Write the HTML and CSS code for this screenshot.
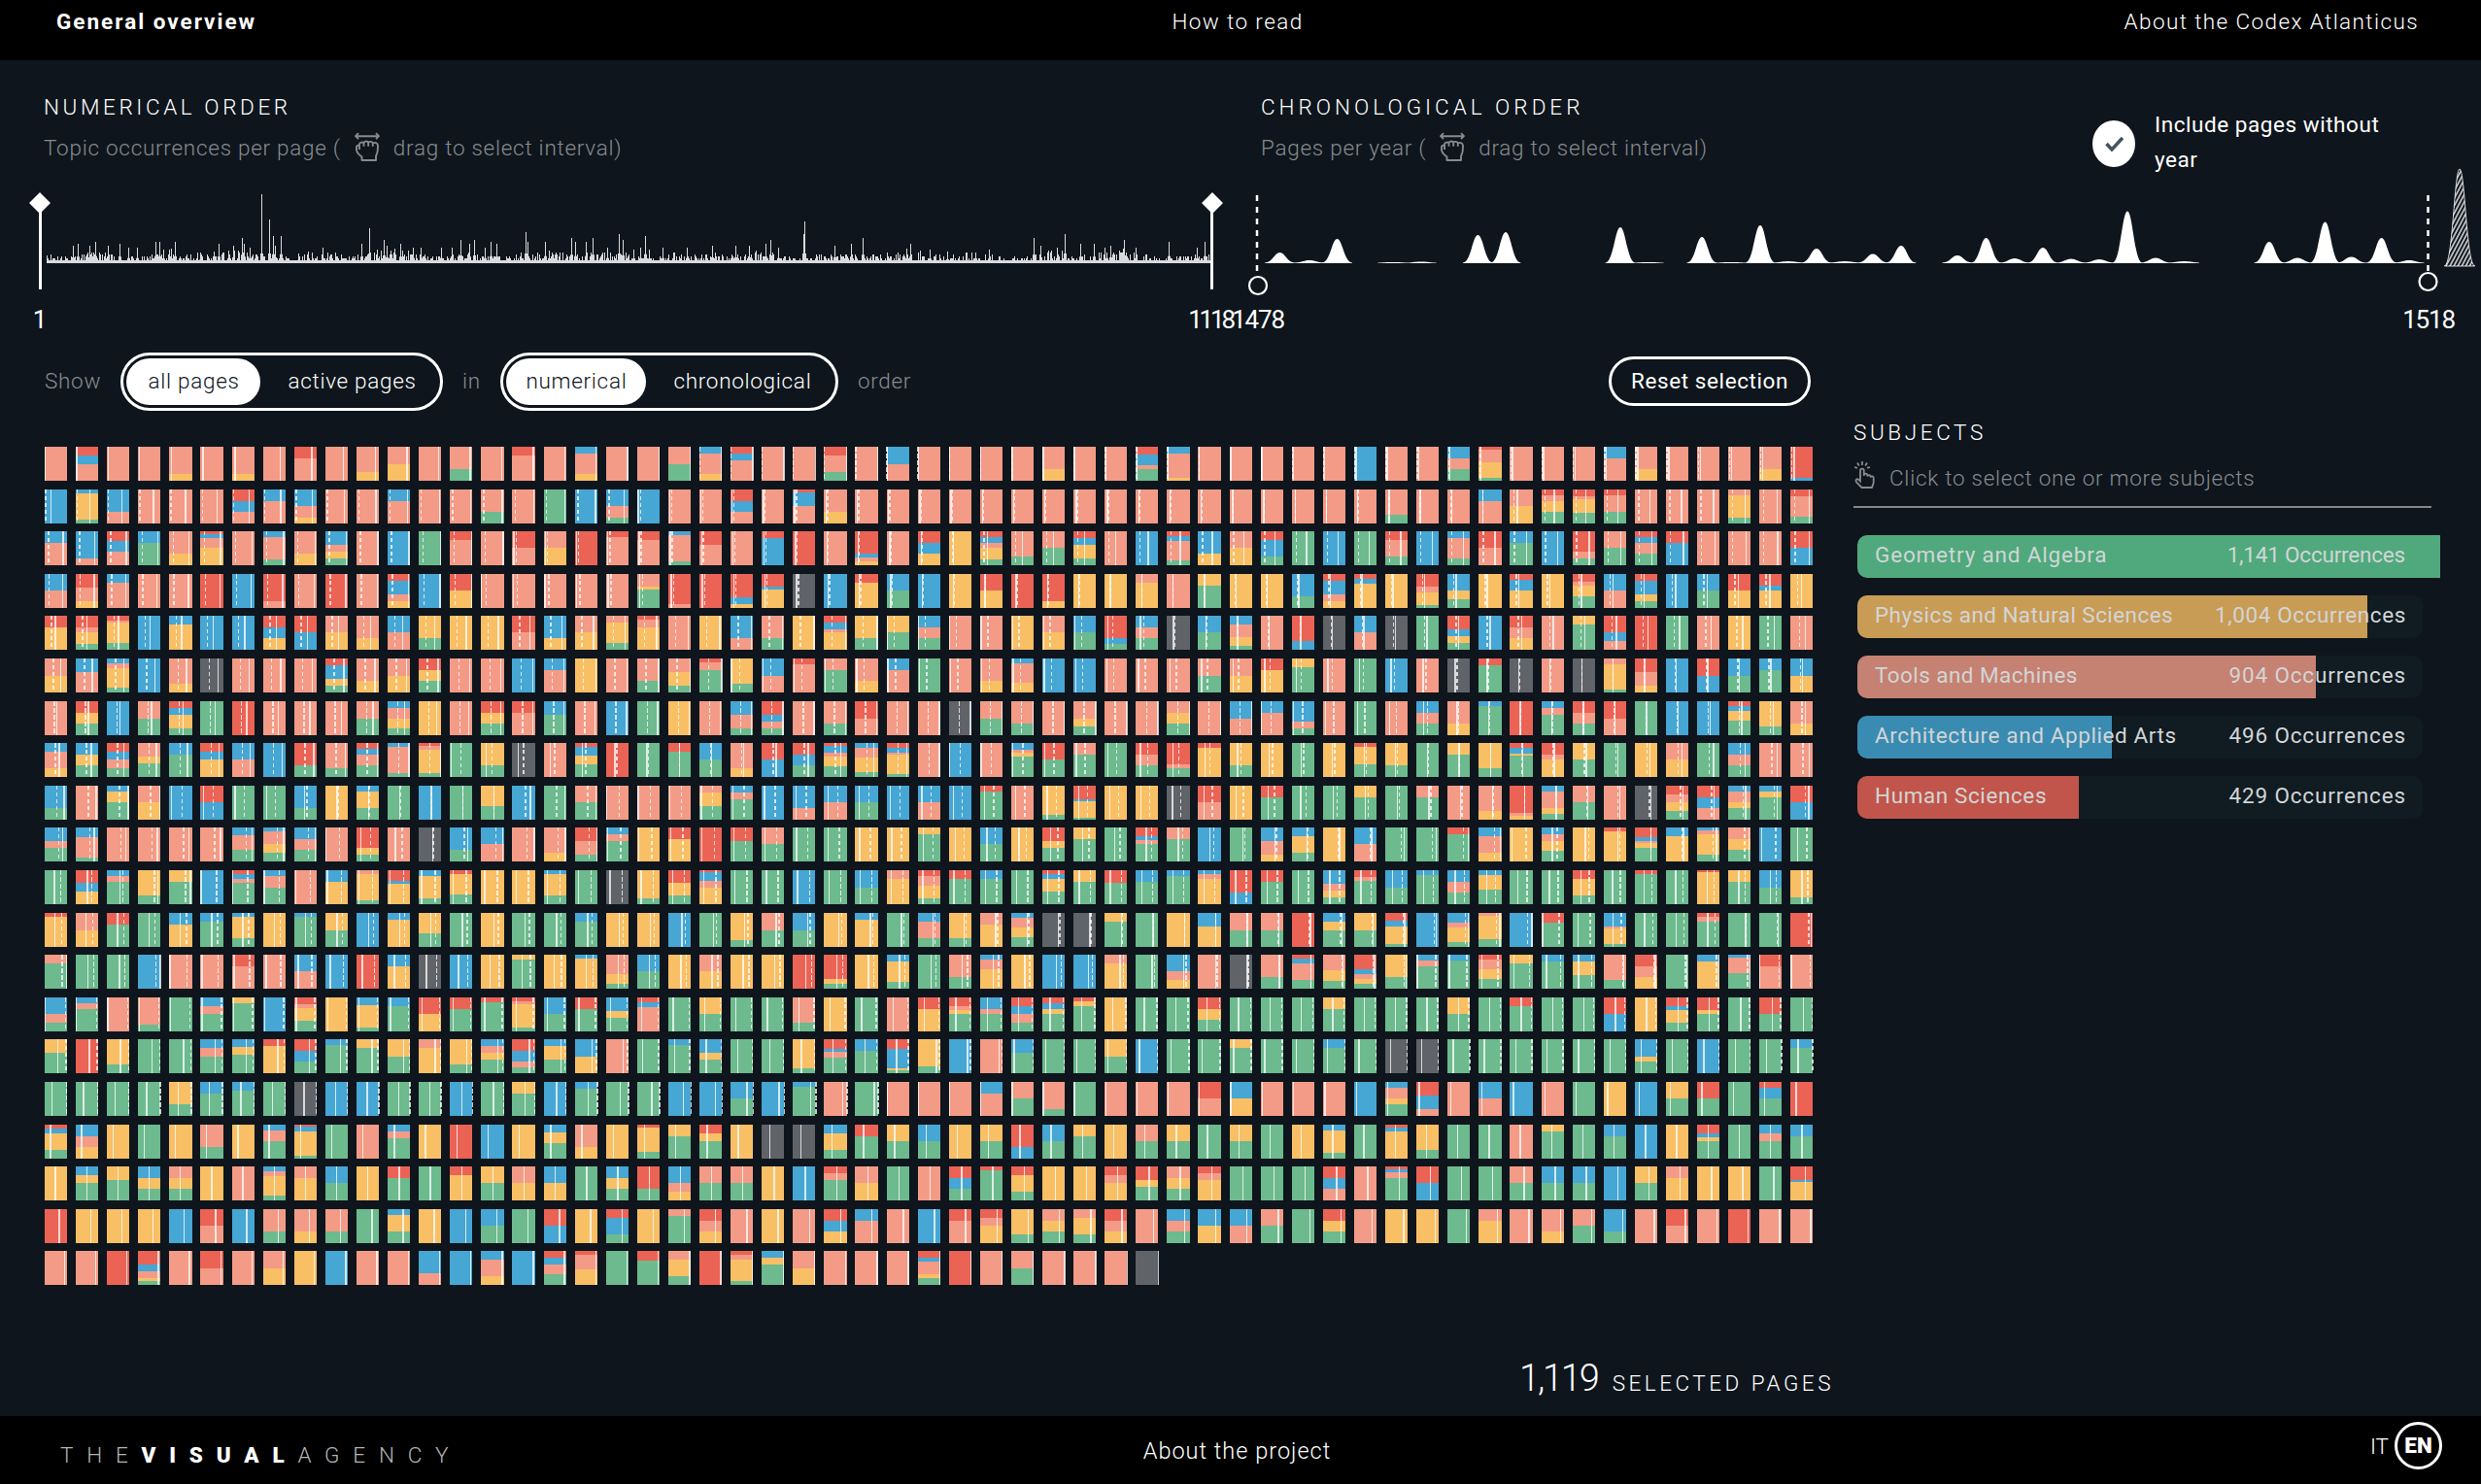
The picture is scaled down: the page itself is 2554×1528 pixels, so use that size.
FILE: index.html
```html
<!DOCTYPE html>
<html lang="en">
<head>
<meta charset="utf-8">
<title>Codex Atlanticus</title>
<link rel="stylesheet" href="styles.css">
</head>
<body>
<header class="topbar">
  <a class="topbar-link is-current">General overview</a>
  <a class="topbar-link">How to read</a>
  <a class="topbar-link">About the Codex Atlanticus</a>
</header>

<section class="charts">
  <div class="chart">
    <div class="chart-head">
      <div>
        <h2 class="title">Numerical order</h2>
        <p class="hint"><span>Topic occurrences per page (</span>
          <svg class="icon-drag" viewBox="0 0 28 32"><use href="#drag"/></svg>
          <span>drag to select interval)</span></p>
      </div>
    </div>
    <svg class="plot" viewBox="0 173 1270 177">
      <path id="histogram" class="bars-path"/>
      <path class="solid-shape" d="M41 198l11 11-11 11-11-11zM1248 198l11 11-11 11-11-11z"/>
      <path class="marker" d="M41.5 209V298M1247.5 209V298"/>
      <text class="tick" x="41" y="338">1</text>
      <text class="tick tick-last" x="1246" y="338">1118</text>
    </svg>
  </div>
  <div class="chart">
    <div class="chart-head chart-head-years">
      <div>
        <h2 class="title title-years">Chronological order</h2>
        <p class="hint"><span>Pages per year (</span>
          <svg class="icon-drag" viewBox="0 0 28 32"><use href="#drag"/></svg>
          <span>drag to select interval)</span></p>
      </div>
      <label class="toggle">
        <svg class="toggle-mark" viewBox="0 0 44 48"><ellipse cx="22" cy="24" rx="22" ry="24"/><path d="M14.500 24l5.500 6 11-12"/></svg>
        <span>Include pages without<br>year</span>
      </label>
    </div>
    <svg class="plot" viewBox="1270 173 1284 177">
      <defs>
        <pattern id="hatch" width="3.6" height="3.6" patternUnits="userSpaceOnUse" patternTransform="rotate(28)">
          <path d="M1 0V4" stroke="#fff" stroke-width="1.3"/>
        </pattern>
      </defs>
      <path id="years" class="solid-shape"/>
      <path id="undated" fill="url(#hatch)" stroke="#fff" stroke-width=".8"/>
      <path class="marker-dashed" d="M1294 201V283M2499.5 201V280"/>
      <circle class="ring" cx="1295" cy="294" r="9"/>
      <circle class="ring" cx="2499.5" cy="290" r="9"/>
      <text class="tick tick-year" x="1295" y="338">1478</text>
      <text class="tick tick-year" x="2500" y="338">1518</text>
    </svg>
  </div>
</section>

<main class="main">
  <section class="pages">
    <div class="controls">
      <span class="word">Show</span>
      <div class="switch switch-pages">
        <button class="option is-on">all pages</button>
        <button class="option">active pages</button>
      </div>
      <span class="word">in</span>
      <div class="switch switch-order">
        <button class="option is-on">numerical</button>
        <button class="option">chronological</button>
      </div>
      <span class="word">order</span>
      <button class="reset">Reset selection</button>
    </div>
    <div id="cells" class="cells"></div>
    <p class="selected"><span class="selected-number">1,119</span><span class="selected-label">selected pages</span></p>
  </section>

  <aside class="subjects">
    <h2 class="title">Subjects</h2>
    <p class="hint subjects-hint">
      <svg class="icon-tap" viewBox="0 0 22 28"><path d="M7 17V9.500a1.900 1.900 0 0 1 3.800 0V15M10.800 15v-1a1.800 1.800 0 0 1 3.500 0v1.500a1.700 1.700 0 0 1 3.300 0v1a1.600 1.600 0 0 1 3.100.5v5l-1.700 5H8.500L3 21.500c-1.500-2 .5-4 2-2.800l2 1.800V16M9 0v4M4 1.500l1.800 3M14 1.500l-1.800 3M1 6l3 .8M17 6l-3 .8"/></svg>
      <span>Click to select one or more subjects</span></p>
    <ul class="subject-list">
      <li class="subject"><span class="fill geometry" style="width:600px"></span><span class="name name-wide">Geometry and Algebra</span><span class="count count-tight">1,141 Occurrences</span></li>
      <li class="subject"><span class="fill physics" style="width:525px"></span><span class="name name-tight">Physics and Natural Sciences</span><span class="count count-near">1,004 Occurrences</span></li>
      <li class="subject"><span class="fill tools" style="width:472px"></span><span class="name name-tight">Tools and Machines</span><span class="count">904 Occurrences</span></li>
      <li class="subject"><span class="fill architecture" style="width:262px"></span><span class="name">Architecture and Applied Arts</span><span class="count">496 Occurrences</span></li>
      <li class="subject"><span class="fill human" style="width:228px"></span><span class="name">Human Sciences</span><span class="count">429 Occurrences</span></li>
    </ul>
  </aside>
</main>

<footer class="footer">
  <div class="logo">THE<b>VISUAL</b>AGENCY</div>
  <a class="footer-link">About the project</a>
  <div class="languages"><span>IT</span><span class="language-on">EN</span></div>
</footer>

<svg class="sprite">
  <symbol id="drag" viewBox="0 0 28 32">
    <path d="M2 4.200h24M5 1.200L2 4.200l3 3M23 1.200l3 3-3 3M8.500 29v-3.500C5 23 3 21 3 18v-2.500C3 14 4.500 13.300 6 14v-1.500c0-2 3.500-2.700 4.500-1.200.8-2.300 4-2.300 4.700-.5 1.300-1.600 4.100-1 4.600.7 1.700-1.200 5.200-.7 5.200 2.500.3 6-.5 8-2 11v4zM10.500 11.300v3.500M15.200 10.800v4M19.800 11.500v3.300M6 14v4"/>
  </symbol>
</svg>
<script src="script.js"></script>
</body>
</html>
```
FILE: styles.css
```css
* { box-sizing: border-box; margin: 0; padding: 0; }
body {
  width: 2554px; height: 1528px; overflow: hidden;
  display: flex; flex-direction: column;
  background: #0e151c; color: #fff;
  font-family: Roboto, "Liberation Sans", sans-serif;
  font-size: 22.5px; font-weight: 300;
}
button { font: inherit; color: inherit; letter-spacing: inherit; background: none; border: 0; }
svg { display: block; }
.sprite { display: none; }

.topbar {
  height: 62px; flex: none; padding: 1px 64px 0 58px; background: #000;
  display: grid; grid-template-columns: 1fr auto 1fr; line-height: 42px;
}
.topbar-link { letter-spacing: 1.4px; white-space: nowrap; }
.topbar-link:last-child { text-align: right; }
.topbar-link.is-current { font-weight: 700; letter-spacing: 2px; }

.charts { display: grid; grid-template-columns: 1270px 1284px; height: 288px; flex: none; padding-top: 27px; }
.chart-head { height: 84px; padding-left: 45px; display: flex; justify-content: space-between; }
.chart-head-years { padding: 0 76px 0 28px; }
.title { font-size: 22.5px; font-weight: 300; line-height: 42px; letter-spacing: 3.6px; text-transform: uppercase; white-space: nowrap; }
.title-years { letter-spacing: 4px; }
.hint { display: flex; align-items: center; line-height: 42px; color: #868b90; letter-spacing: .73px; white-space: nowrap; }
.icon-drag { width: 28px; height: 32px; margin: 0 13px; fill: none; stroke: #868b90; stroke-width: 1.9; stroke-linejoin: round; }
.plot { width: 100%; height: 177px; overflow: visible; }
.bars-path { fill: #d9dadc; }
.solid-shape { fill: #fff; }
.marker { stroke: #fff; stroke-width: 3; }
.marker-dashed { stroke: #fff; stroke-width: 2.5; stroke-dasharray: 6 6; }
.ring { fill: #0e151c; stroke: #fff; stroke-width: 2.2; }
.tick { fill: #fff; font-size: 26px; font-weight: 400; text-anchor: middle; }
.tick-last { letter-spacing: -3.2px; }
.tick-year { letter-spacing: -1.2px; }
.toggle { display: flex; width: 324px; line-height: 36px; margin-top: 21px; font-weight: 400; letter-spacing: .55px; white-space: nowrap; }
.toggle-mark { width: 44px; height: 48px; margin: 14px 20px 0 0; flex: none; fill: #fff; }
.toggle-mark path { fill: none; stroke: #47525e; stroke-width: 3.5; }

.main { display: flex; flex: 1; min-height: 0; }
.pages { width: 1908px; display: flex; flex-direction: column; padding: 13px 0 10px 46px; }
.controls { display: flex; align-items: center; height: 60px; width: 1818px; letter-spacing: .7px; line-height: 40px; }
.word { color: #868b90; padding-bottom: 2px; }
.switch { display: flex; align-items: center; height: 60px; padding: 0 2px 0 3px; border: 3px solid #fff; border-radius: 30px; margin: 0 20px; }
.switch-pages { width: 332px; }
.switch-order { width: 348px; }
.option { flex: 1 1 auto; height: 48px; border-radius: 24px; padding: 0 0 2px 1px; white-space: nowrap; }
.option:last-child { padding-left: 6px; }
.option.is-on { flex: none; background: #fff; color: #0e151c; }
.switch-pages .is-on { width: 138px; }
.switch-order .is-on { width: 144px; }
.reset { margin: 0 0 2px auto; width: 208px; height: 51px; padding-bottom: 1px; border: 3px solid #fff; border-radius: 26px; font-weight: 400; letter-spacing: .6px; white-space: nowrap; }

.cells { display: grid; grid-template-columns: repeat(57, 32.1px); grid-auto-rows: 43.6px; margin-top: 37px; }
.cell { position: relative; width: 23.200px; height: 35px; }
.solid, .dashed { position: absolute; top: 0; width: 1.400px; height: 35px; margin-left: -.7px; }
.solid { background: rgba(255, 255, 255, .76); }
.dashed { background: repeating-linear-gradient(rgba(255, 255, 255, .76) 0 4.500px, transparent 4.500px 7px); }

.selected { display: flex; justify-content: flex-end; margin-top: auto; margin-right: 20px; line-height: 48px; align-items: baseline; }
.selected-number { font-size: 38px; letter-spacing: -2.2px; margin-right: 15px; }
.selected-label { letter-spacing: 3.5px; text-transform: uppercase; }

.subjects { padding-top: 74px; width: 595px; }
.subjects-hint { margin-top: 5px; height: 52px; align-items: flex-start; border-bottom: 2px solid #83878c; }
.icon-tap { width: 22px; height: 28px; margin: 4px 15px 0 0; fill: none; stroke: #868b90; stroke-width: 1.800; }
.subject-list { list-style: none; margin: 28px 0 0 4px; display: grid; gap: 18px; }
.subject {
  position: relative; width: 582px; height: 44px; padding: 0 17px 0 18px; border-radius: 10px;
  background: #101b22; color: #d2d5d6; line-height: 41px; font-weight: 400;
  display: flex; justify-content: space-between; white-space: nowrap;
}
.name, .count { position: relative; letter-spacing: .6px; }
.name-wide { letter-spacing: .82px; }
.name-tight { letter-spacing: .43px; }
.count { letter-spacing: .86px; }
.count-near { letter-spacing: .6px; }
.count-tight { letter-spacing: -.2px; padding-right: 1px; }
.fill { position: absolute; left: 0; top: 0; height: 44px; border-radius: 10px 0 0 10px; }
.geometry { background: #4fa97d; }
.physics { background: #c99c56; }
.tools { background: #c58171; }
.architecture { background: #3a8bb1; }
.human { background: #c1554b; }

.footer { height: 70px; flex: none; padding: 0 40px 0 33px; background: #000; display: grid; grid-template-columns: 1fr auto 1fr; }
.logo { line-height: 42px; margin: 19px 0 0 29px; letter-spacing: 13.8px; color: #b4b4b4; white-space: nowrap; }
.logo b { color: #fff; font-weight: 900; }
.footer-link { font-size: 23.5px; letter-spacing: 1px; line-height: 42px; margin-top: 15px; }
.languages { display: flex; justify-content: flex-end; align-items: center; height: 61px; }
.language-on { width: 49px; height: 49px; margin-left: 6px; border: 3px solid #fff; border-radius: 50%; font-weight: 900; line-height: 43px; text-align: center; }
```
FILE: script.js
```js
// Subjects of every page, one string per row: letter = subject, digits = weight.
// h human, a architecture, t tools, p physics, g geometry, x none
const rows = [
  't h1a1t2 t t t4p1 t t4p1 t h1t2 t t3p1 tp t t2g1 t h1t3 t a2t6p2 t t tg a2t6p2 h2a2t6 t t h1t2g1 t at t t t t t2p1 t t h2a3t1g3 a2t7p1 t t t t t a t t a1t1g1 h1t4p5g1 t t t a1t2 t2p1 t t t t2p1 h9a1',
  'a a1p7g1 a2t1 t t t h1a1t1 a1t2 a3t2p1 t t a1t2 t t t2g1 t g a a3t2g1 a t t h1a1t1 t h1a4t5 t2p1 t t t t t t t t t t t t t t t t t t3g1 t t a1t2 tp h1t1p2g2 h2t1p4g3 h1t3g2 t t t t1p4g1 t h1t3g1',
  'a1t2 a4t1 h3a3t4 a1g2 t2p1 h1a1t3p5 t a1t4g1 t2p1 a4t2p2g2 t a g h1t3 t ht tp h h1t5 h1t3 a1t7g1 h2t3 t h1a4 h t h6a1t1p1 t h1a1p1 p h1a1t1p2g1 t3g1 tg h2a2p4g2 t a h1a1t4g1 a2p1 tp h1a2g1 g a g h1t2g1 a a1t3g1 ht a1g2 a h3t1g1 tg h1a1t2g2 h1a2 t t t ha',
  'at h4t4p2 a1t3 t t h a h4t1 t h t h2a4t2p2 a hp t t t t t t4p1g6 h9t1 h h7a2p1 h4a1p6 x a h1p3 ag a p hp h h4p1 p p t1p3 t p1g2 p p a2g1 h2a4t2p2 h1a1p5 p h4t2p4g1 a2p1g1 p h1a2p3 p h2t1p3g3 at h2a4p2g2 a ag hp h2a1p3 p',
  'h1p2 h2t1p2g1 h3t1p11g4 a a1p3 a a h1a1p1 ha tp t2p1 at p2g1 p p ht a2p1 tp t2p6g2 h1t2p6 t p a2t1 t2g1 p h2a2t1p5 p2g1 pg a1t1g1 t t p tp ag h4a1g1 a1t1g1 x ag a2t3p2g1 t h3a1 x at x g h4a2p2g2 a h1t1p1 t p1g3 h2a1t1 h g t p g t',
  'tp a2t3 a1t1p4g1 a t3p1 x t t t h2a4p2g2 t2p1 tp h1p1g1 t t a a1t2 p t t2g1 t2p2g1 h1t2g6 p3g1 at h1t5 t1g2 t2p1 a1t2 g t t2p1 a1t4p2 a a t t t tg tp h1p2 p1g3 t g a t x h1g4 x t x t2p8g1 h4t4p2 a ha ag a1g2 ap',
  't h1p1g1 a tg h1a1p2g1 g h t t t tg a2t3p3g2 p t h1p1g1 h1t2 a2g3 t a g p t a2t2g1 h2a1t1g1 t t2g1 ht t t x tg t2g1 t t2p1g1 t t t1p1g1 t at a1t2 a3t1g1 t g t a1t1g1 t2p1 a1g6 h a2t2g6 h1t1g1 ht g a a h1a1p2g3 p3g1 t2p1',
  'a1t2p1 a1p1g1 h1a1t1g1 t4p2g4 a1g2 h1a1p2 at a h2g1 t3g1 h1a1t2g2 a1t7g1 h1t1p7g1 g p2g1 x t h1a2p2g3 h g h1g3 ag t3p1 ha h1a1g1 h1a2t1p3g3 a1t2p3g1 h2a2t1p8g1 t a t a2t1p1g6 hg t1g2 g h1t1g1 h5t1g2 h1p6 p2g1 p g p h1p4g3 p2g1 g p1g2 p3g1 h2a2p1g8 h2t1p3 pg g p tp g a1t1g1 t t',
  'a2g1 t a1p2g3 tp a ha g g a2g1 p a1p3g2 g a g p3g2 a g tg t t t t1p2g2 a2t2g6 a a2t1 at ag a at a h1g5 t p6g1 h8a1p10g1 p p x ht p h1g2 g g p1g2 g t1g2 t t3p1 h8t1p1 a1t3p1g1 tg t x h2t2p2g2 h1a1t1 a1t2p1g2 a1p1g4 ha',
  'a4t2g4 a3t6g1 t t t t a2t4g3 a1t3p2g2 a3t3g3 t h6p2g2 t x a2g1 at t t3p1 h4t4g2 a2t2g6 p h1p2 h h2g3 tg g g p p p1g4 p ag p h2p1g2 p1g2 g h2a1t1g4 t1g2 a g a2t2p1 a1p2g1 p at g g h1g4 a1t2p1 p a2t2p3g3 p h1p7 h6a2t1p3g8 a1p3 a1t1p6g2 t1p1g1 a g',
  'g h3a2p3 a1t1g4 p3g1 p1g2 a h1a1t1g5 a1t2g3 t a1p2 t1p6g1 h3a1p6 a1p4g1 h1p6g3 p p a1p5g2 g x p5g1 h3p3g2 h1a4t3p8 g g a g ag t1p3 h2t3p4g2 h1g3 a1g3 g h1a1p3g3 p1g2 h3g5 a1g2 a1g5 a1t1p6 h2a1 h1g2 g a4t2p2g2 h2t1g7 ag a1g6 a1t1g1 a1p3g3 g g h1p2g1 g h1g9 g h1p15 p1g2 ag p4g1',
  'h1p8 tp h1g2 g a1p2 a1g3 a1p5g2 p a1g7 pg a a1p4 p3g2 g p g g a1g3 p p a g p4g1 tg ag p a1p4 g a1t2g1 p3g1 t1p2 a1t2p2g2 x x p1g3 g p a2p3 tg tg h a1p1g2 pg h3a2p7g1 a a2t1p3g1 t1p9g3 a h2g5 g a5t1p6g1 g g h1t1g6 g g h',
  't1g3 g g a t t h1t2 t at a h a1p2 x a p p1g6 p a1p9 t4p2g1 ag p tp p p h h5p1g1 p a1p3g1 g t2g1 a1t2p4 p a a t1p3 g a2t1p1 t x t2g1 h1a1t4g2 t4p3g2 h3a1t1p1g1 p2g1 a1t1g4 a1g5 h1t2p2g2 p1g3 a1g4 a1p2g2 t3g1 h1t1p1 g a1p4 a1t5g5 h1t2 t',
  'a2t1g1 a1t1g4 t t4g1 g a1t1g2 p1g5 a h2t1p4g3 p a2p6g1 a1g3 hp h1g2 h1g6 h1t1p7g1 ag h1g2 a2p1g2 h1a1t5 g pg g g t3g1 p g t h1p2 h2t1p1g4 a2t1g3 h1a1t1g1 h1a1p1g3 h1p1g6 p g g h1p1g1 g g g p1g2 g g g pg g h1g3 g g ha p h2a1p3g2 h3p1g4 g hg g',
  'p2g3 h p3g1 g g a1t1g2 a2p2g5 h1p4 h1a1g1 a1g5 p1g3 pg t1p3 p3g1 a2t2p2g4 h2a2t1g1 a1p2g2 ap t g a1g5 a4p2g4 g g p6g1 h3a1t2g5 a1g2 h4a8p1g1 p4g1 a t a2g3 g g pg a g g p1g3 g g a1g3 g x x g g g g g g a3p1g2 g a g g a1g3',
  'g g g g p2g1 a1g2 a1g3 g x a a g g a g p1g2 a a1g4 g g a a ag a a1g6 t g t t t a1t2 tg t4g1 g t t t ht ap t t t a a1t2p1g2 h2a2t1 t at a t g p a pg hg g h1a2g3 h',
  'h1a1p4g2 a1t1p1 p g p t2g1 p a1t2g3 h1a2p10g1 g t a1t1g3 p h a p a2p3g4 t2p1 p h1p7g2 p1g2 h1p1g2 p x x a1p2g1 h1g2 pg ag p pg h2a1 ag p1g2 p tg pg g pg g p a1p4g1 g h1a1p8 p3g1 g g t p1g4 g a1g2 a p h2a1p1g4 g a1t1g2 a1g2',
  'p a1p1g2 p2g3 a1p1g1 t1p1g1 p t a1t1p4g1 t1p2 ag p h1g2 g h1p3 pg tp ap g a1p1g1 h2g1 a2t1p1 tg tg p a h2t2g6 tp g t h1a1g1 h1g8 h1p2g1 p p h1t1p2 h4p2g4 t1p1g1 h2t2p6 g g g h1a1t1 t h1a1t2g8 ha g g tg ag ag a pg t1p2 p p g h8a1p11',
  'h p p p a ht a t2g1 t2p1 t2g1 g a1p3g2 p a ag g ha p h1a2g1 p t1g4 h1t1p1 t p t h1a1p1 a1t2 t a h1t2 h1t1p2 p3g1 t1p1g1 t1p2g1 h1t1p1 t a1t1g1 ap at tg g h1p1g1 t p p g t1p2 t t2p1 tg a2g1 t ht t h t t',
  't t h h4a2t2p1g1 t ht t tp p a t t a2t1 a a1t2p1 a h2a2t3g3 h1t4p4 g h2g5 t1p2g1 h h1t1p5g1 a2p2g6 tp t t t h2a1t4p1g2 h t tg t t t x'
];

// Position of the solid line: runs of [column, share of the cell's width, ...]
const solid = [
  [[0, .03, 3, .05, 6, .15], [7, .77, 12, .88, 18, .97, 26, 1], [27, .03, 38, .06, 56, .16]],
  [[0, .28], [1, .63, 12, .92, 16, .95, 17, .92, 18, .82], [19, .06, 46, .18, 47, .33, 48, .58, 56, .82]],
  [[0, .82, 8, .93, 14, .97], [15, .07, 26, .13, 29, .2, 30, .33, 31, .5, 34, .5, 37, .63, 56, .82]],
  [[0, .8, 7, .88, 13, .96], [14, .02, 19, .12, 37, .28, 41, .33, 56, .48]],
  [[0, .48, 5, .57, 9, .6, 13, .73, 18, .86, 19, .87, 26, .97], [27, .03, 33, .07, 37, .35, 46, .5, 56, .67]],
  [[0, .72, 12, .85, 18, .95, 21, .99], [22, .04, 34, .1, 38, .18, 43, .25, 46, .37, 56, .52]],
  [[0, .53, 6, .66, 10, .73, 15, .9, 26, .95, 38, 1], [39, .03, 43, .2, 45, .42, 50, .5, 56, .65]],
  [[0, .64, 3, .8, 6, .82, 12, .97], [13, .06, 14, .22, 19, .44, 24, .68, 28, .97], [29, .03, 34, .15, 38, .37, 45, .5, 56, .82]],
  [[0, .87, 3, .97], [4, .1, 7, .17, 8, .47, 9, .52, 14, .58, 15, .8, 16, .95, 17, .95], [18, .03, 25, .17, 37, .25, 42, .5, 50, .72, 56, .8]],
  [[0, .8, 5, .88, 8, .95], [9, .03, 11, .35, 12, .63, 14, .96, 17, .98], [18, .07, 26, .2, 33, .4, 37, .53, 38, .6, 43, .83, 46, .96], [47, .1, 48, .5, 54, .93], [55, .1, 56, .32]],
  [[0, .43, 2, .58, 3, .88, 4, .93], [5, .03, 15, .17, 37, .27, 48, .36, 56, .5]],
  [[0, .45, 10, .53, 19, .6, 32, .72, 44, .88, 47, .97], [48, .07, 50, .42, 53, .48, 54, .77, 56, .92]],
  [[0, .97], [1, .53, 2, .55], [3, .98], [4, .03, 13, .37, 18, .55, 31, .6, 38, .8, 43, .93], [44, .03, 49, .28], [50, .9, 54, .98], [55, .02, 56, .03]],
  [[0, .02, 18, .2, 37, .4, 56, .58]],
  [[0, .58, 17, .78, 18, .78], [19, .25, 27, .45], [28, .83, 30, .84], [31, .13, 56, .33]],
  [[0, .33, 12, .5, 18, .63, 26, .84], [27, .03, 38, .06, 56, .25]],
  [[0, .25, 56, .5]],
  [[0, .48, 56, .65]],
  [[0, .65, 37, .78, 56, .9]],
  [[0, .88, 35, 1]]
];

// Position of the dashed line
const dashed = [
  [[21, .01, 56, .06]], [[0, .05, 19, .15, 56, .18]], [[0, .17, 56, .2]], [[0, .2, 56, .3]],
  [[0, .3, 56, .39]], [[0, .38, 56, .43]], [[0, .43, 56, .5]], [[0, .47, 56, .55]],
  [[0, .55, 56, .66]], [[0, .62, 56, .73]], [[0, .71, 56, .76]], [[0, .75, 56, .8]],
  [[0, .78, 56, .87]], [[0, .92, 56, .95]], [[0, .95, 56, .98]], [[0, .97, 26, 1.02]]
];

const colors = { h: '#eb6355', a: '#46a6d4', t: '#f39b86', p: '#f9bf65', g: '#6cba8e', x: '#606368' };

function position(runs, col) {
  for (const run of runs || []) {
    if (col < run[0] || col > run[run.length - 2]) continue;
    if (run.length === 2 || col === run[0]) return run[1];
    for (let i = 2; i < run.length; i += 2) {
      if (col > run[i]) continue;
      return run[i - 1] + (run[i + 1] - run[i - 1]) * (col - run[i - 2]) / (run[i] - run[i - 2]);
    }
  }
  return null;
}

function bands(code) {
  const parts = [...code.matchAll(/([a-z])(\d*)/g)].map(m => [m[1], +m[2] || 1]);
  const total = parts.reduce((sum, part) => sum + part[1], 0);
  let at = 0;
  const stops = parts.map(([key, weight]) => {
    const from = at;
    at += weight / total * 35;
    return `${colors[key]} ${from.toFixed(1)}px ${at.toFixed(1)}px`;
  });
  return `linear-gradient(${stops.join(',')})`;
}

const grid = document.getElementById('cells');
rows.forEach((row, r) => row.split(' ').forEach((code, c) => {
  const cell = document.createElement('div');
  cell.className = 'cell';
  cell.style.background = bands(code);
  for (const [name, runs] of [['solid', solid[r]], ['dashed', dashed[r]]]) {
    const share = position(runs, c);
    if (share === null) continue;
    const line = document.createElement('i');
    line.className = name;
    line.style.left = share * 100 + '%';
    cell.append(line);
  }
  grid.append(cell);
}));

// Occurrences per page: the tall bars, [x, height]
const peaks = [[48,8],[75,18],[80,20],[92,18],[98,22],[111,18],[123,20],[132,16],[141,16],[160,22],[164,22],[168,14],[174,14],[180,22],[206,11],[220,12],[225,20],[240,18],[249,26],[251,20],[257,16],[269,71],[277,45],[281,28],[283,18],[289,28],[307,10],[317,12],[332,16],[372,20],[380,36],[388,14],[395,24],[398,18],[412,20],[425,16],[433,16],[454,16],[465,16],[474,24],[483,20],[488,24],[499,16],[505,22],[511,20],[541,32],[543,22],[561,22],[588,26],[592,22],[603,22],[610,26],[625,16],[637,30],[641,24],[652,14],[659,16],[664,28],[668,14],[682,16],[707,16],[733,18],[757,18],[771,18],[788,20],[793,24],[801,16],[827,30],[828,43],[859,18],[876,20],[888,26],[937,20],[957,14],[975,12],[1018,14],[1064,26],[1071,18],[1088,16],[1096,30],[1112,20],[1126,20],[1137,16],[1143,18],[1157,24],[1169,16],[1203,22],[1232,16],[1240,22]];
const heights = new Map();
let seed = 11;
const random = () => (seed = (seed * 16807) % 2147483647) / 2147483647;
for (let x = 48; x < 1247; x++) {
  const dense = .5 + .5 * Math.sin(x / 17) * Math.sin(x / 41 + 1);
  heights.set(x, 3 + 2 * Math.floor(Math.pow(random(), 1.9) * (2 + 5 * dense)));
}
for (const [x, h] of peaks) {
  heights.set(x, h);
  for (const d of [-1, 1]) heights.set(x + d, Math.max(heights.get(x + d) || 0, Math.min(10, h / 3)));
}
document.getElementById('histogram').setAttribute('d',
  [...heights].filter(([x]) => x >= 48).map(([x, h]) => `M${x} 271v${-h}h1v${h}z`).join(''));

// Pages per year: [x, top]
const bell = (x, top, base) =>
  `M${x - 15.5} ${base}v-.4C${x - 7} ${base - 1} ${x - 5.5} ${top} ${x} ${top}S${x + 7} ${base - 1} ${x + 15.5} ${base - .4}v.4z`;
const years = [[1317.5,260],[1348,268],[1376.5,246],[1434,270],[1463,269.5],[1521.4,242],[1550,239],[1668,234],[1697,270],[1752,244],[1782.6,270],[1812,232],[1841,269],[1870,256],[1899,269],[1928,261.5],[1957,253],[2015,263],[2044.6,245],[2074,266],[2103,255],[2132,266.5],[2161,267],[2190,217.5],[2219,265.5],[2248.5,269],[2336,249],[2365,265.5],[2393.5,228.5],[2420.5,264.5],[2451.6,245],[2480,268]];
document.getElementById('years').setAttribute('d', years.map(([x, top]) => bell(x, top, 271)).join(''));
document.getElementById('undated').setAttribute('d', bell(2532, 174, 274));
```
